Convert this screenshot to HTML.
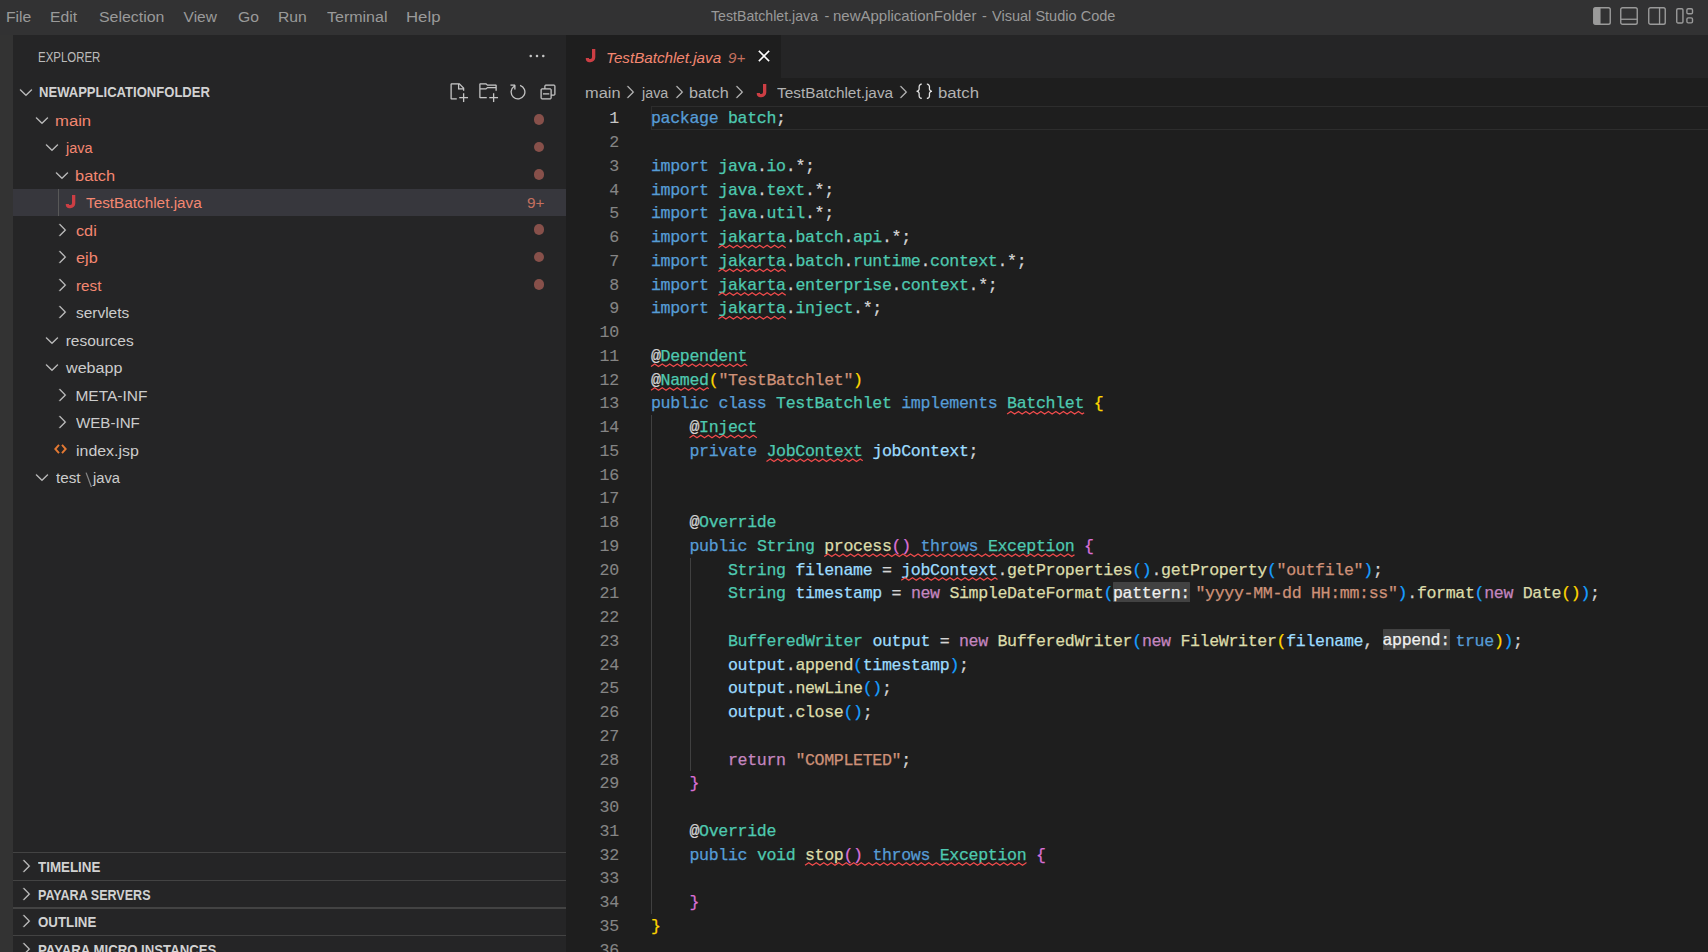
<!DOCTYPE html>
<html><head><meta charset="utf-8"><title>VS Code</title><style>
*{margin:0;padding:0;box-sizing:border-box}
html,body{width:1708px;height:952px;overflow:hidden;background:#1e1e1e}
body{position:relative;font-family:"Liberation Sans",sans-serif;-webkit-font-smoothing:antialiased}
.abs{position:absolute}
.box{position:absolute}
.u{position:absolute;white-space:pre;line-height:1;transform-origin:0 0;font-family:"Liberation Sans",sans-serif}
.ln{position:absolute;left:566px;width:52.8px;text-align:right;height:23.75px;font:16.6px "Liberation Mono",monospace;letter-spacing:-0.335px;line-height:23.75px;white-space:pre;padding-top:1.2px;-webkit-text-stroke:0.1px currentColor}
.cl{position:absolute;left:0;width:1708px;height:23.75px;font:16.6px "Liberation Mono",monospace;letter-spacing:-0.335px;line-height:23.75px;white-space:pre;-webkit-text-stroke:0.25px currentColor}
.cl span{position:absolute;top:1.2px;height:23.75px;line-height:23.75px}
.k{color:#569cd6}.c{color:#c586c0}.t{color:#4ec9b0}.v{color:#9cdcfe}.f{color:#dcdcaa}.s{color:#ce9178}.d{color:#d4d4d4}
.b1{color:#ffd700}.b2{color:#da70d6}.b3{color:#179fff}
.cl span.hint{color:#f0f0f0;background:#424242;top:0.6px;height:20.4px;line-height:24.95px;border-radius:0.5px;overflow:hidden}
svg{display:block;overflow:visible}
</style></head><body>
<div class="box" style="left:0;top:0;width:1708px;height:35px;background:#323233"></div>
<div class="box" style="left:0;top:35px;width:13px;height:917px;background:#333333"></div>
<div class="box" style="left:13px;top:35px;width:553px;height:917px;background:#252526"></div>
<div class="box" style="left:566px;top:35px;width:1142px;height:43px;background:#252526"></div>
<div class="box" style="left:566px;top:35px;width:214.7px;height:43px;background:#1e1e1e"></div>
<div class="box" style="left:13px;top:188.75px;width:553px;height:27.5px;background:#37373d"></div>
<div class="box" style="left:58px;top:188.75px;width:1.25px;height:27.5px;background:#585858"></div>
<div class="box" style="left:13px;top:852.2px;width:553px;height:1.25px;background:#434343"></div>
<div class="box" style="left:13px;top:879.8px;width:553px;height:1.25px;background:#434343"></div>
<div class="box" style="left:13px;top:907.3px;width:553px;height:1.25px;background:#434343"></div>
<div class="box" style="left:13px;top:934.8px;width:553px;height:1.25px;background:#434343"></div>
<div class="box" style="left:650.6px;top:106.25px;width:1060px;height:23.75px;border:1.25px solid #2d2d2d"></div>
<div class="box" style="left:651px;top:415.00px;width:1.25px;height:498.75px;background:#404040"></div>
<div class="box" style="left:689.5px;top:557.50px;width:1.25px;height:213.75px;background:#404040"></div>
<svg class="abs" style="left:1593px;top:7px" width="18" height="18" viewBox="0 0 18 18"><rect x="0.75" y="0.75" width="16.5" height="16.5" rx="1.8" fill="none" stroke="#9a9a9a" stroke-width="1.4"/><rect x="0.75" y="0.75" width="6.8" height="16.5" fill="#9a9a9a"/></svg>
<svg class="abs" style="left:1619.9px;top:7px" width="18" height="18" viewBox="0 0 18 18"><rect x="0.75" y="0.75" width="16.5" height="16.5" rx="1.8" fill="none" stroke="#9a9a9a" stroke-width="1.4"/><rect x="0.75" y="11.6" width="16.5" height="1.3" fill="#9a9a9a"/></svg>
<svg class="abs" style="left:1648px;top:7px" width="18" height="18" viewBox="0 0 18 18"><rect x="0.75" y="0.75" width="16.5" height="16.5" rx="1.8" fill="none" stroke="#9a9a9a" stroke-width="1.4"/><rect x="10.9" y="0.75" width="1.3" height="16.5" fill="#9a9a9a"/></svg>
<svg class="abs" style="left:1676px;top:7px" width="18" height="18" viewBox="0 0 18 18"><rect x="0.75" y="1.75" width="6.2" height="14.2" rx="1.3" fill="none" stroke="#9a9a9a" stroke-width="1.4"/><rect x="10.9" y="1.75" width="5.6" height="5" rx="1.3" fill="none" stroke="#9a9a9a" stroke-width="1.4"/><rect x="10.9" y="10.9" width="5.6" height="5" rx="1.3" fill="none" stroke="#9a9a9a" stroke-width="1.4"/></svg>
<svg class="abs" style="left:526.80px;top:46.00px" width="20" height="20" viewBox="0 0 16 16"><path fill="#c5c5c5" stroke="#c5c5c5" stroke-width="0.05" fill-rule="evenodd" clip-rule="evenodd" d="M4 8a1 1 0 1 1-2 0 1 1 0 0 1 2 0zm5 0a1 1 0 1 1-2 0 1 1 0 0 1 2 0zm5 0a1 1 0 1 1-2 0 1 1 0 0 1 2 0z"/></svg>
<svg class="abs" style="left:447.50px;top:81.50px" width="20" height="20" viewBox="0 0 16 16"><path fill="#c5c5c5" stroke="#c5c5c5" stroke-width="0.05" fill-rule="evenodd" clip-rule="evenodd" d="M9.5 1.1l3.4 3.5.1.4v2h-1V6H8V2H3v11h4v1H2.5l-.5-.5v-12l.5-.5h6.7l.3.1zM9 2v3h2.9L9 2zm4 14h-1v-3H9v-1h3V9h1v3h3v1h-3v3z"/></svg>
<svg class="abs" style="left:477.70px;top:81.50px" width="20" height="20" viewBox="0 0 16 16"><path fill="#c5c5c5" stroke="#c5c5c5" stroke-width="0.05" fill-rule="evenodd" clip-rule="evenodd" d="M14.5 2H7.71l-.85-.85L6.51 1h-5l-.5.5v11l.5.5H7v-1H1.99V6h4.49l.35-.15.86-.86H14v1.5l-.001.51h1.011V2.5L14.5 2zm-.51 2h-6.5l-.35.15-.86.86H2v-3h4.29l.85.85.36.15H14l-.01.99zM13 16h-1v-3H9v-1h3V9h1v3h3v1h-3v3z"/></svg>
<svg class="abs" style="left:507.50px;top:81.50px" width="20" height="20" viewBox="0 0 16 16"><path fill="#c5c5c5" stroke="#c5c5c5" stroke-width="0.05" fill-rule="evenodd" clip-rule="evenodd" d="M4.681 3H2V2h3.5l.5.5V6H5V4a5 5 0 1 0 4.53-.761l.302-.954A6 6 0 1 1 4.681 3z"/></svg>
<svg class="abs" style="left:538.00px;top:82.00px" width="20" height="20" viewBox="0 0 16 16"><path fill="#c5c5c5" stroke="#c5c5c5" stroke-width="0.05" fill-rule="evenodd" clip-rule="evenodd" d="M9 9H4v1h5V9z M5 3l1-1h7l1 1v7l-1 1h-2v2l-1 1H3l-1-1V6l1-1h2V3zm1 2h4l1 1v4h2V3H6v2zm4 1H3v7h7V6z"/></svg>
<svg class="abs" style="left:15.50px;top:82.40px" width="20" height="20" viewBox="0 0 16 16"><path fill="#c5c5c5" stroke="#c5c5c5" stroke-width="0.2" fill-rule="evenodd" clip-rule="evenodd" d="M7.976 10.072l4.357-4.357.62.618L8.284 11h-.618L3 6.333l.619-.618 4.357 4.357z"/></svg>
<svg class="abs" style="left:31.60px;top:109.50px" width="20" height="20" viewBox="0 0 16 16"><path fill="#c5c5c5" stroke="#c5c5c5" stroke-width="0.2" fill-rule="evenodd" clip-rule="evenodd" d="M7.976 10.072l4.357-4.357.62.618L8.284 11h-.618L3 6.333l.619-.618 4.357 4.357z"/></svg>
<svg class="abs" style="left:41.50px;top:137.00px" width="20" height="20" viewBox="0 0 16 16"><path fill="#c5c5c5" stroke="#c5c5c5" stroke-width="0.2" fill-rule="evenodd" clip-rule="evenodd" d="M7.976 10.072l4.357-4.357.62.618L8.284 11h-.618L3 6.333l.619-.618 4.357 4.357z"/></svg>
<svg class="abs" style="left:51.70px;top:164.50px" width="20" height="20" viewBox="0 0 16 16"><path fill="#c5c5c5" stroke="#c5c5c5" stroke-width="0.2" fill-rule="evenodd" clip-rule="evenodd" d="M7.976 10.072l4.357-4.357.62.618L8.284 11h-.618L3 6.333l.619-.618 4.357 4.357z"/></svg>
<svg class="abs" style="left:51.70px;top:219.80px" width="20" height="20" viewBox="0 0 16 16"><path fill="#c5c5c5" stroke="#c5c5c5" stroke-width="0.2" fill-rule="evenodd" clip-rule="evenodd" d="M10.072 8.024L5.715 3.667l.618-.62L11 7.716v.618L6.333 13l-.618-.619 4.357-4.357z"/></svg>
<svg class="abs" style="left:51.70px;top:247.30px" width="20" height="20" viewBox="0 0 16 16"><path fill="#c5c5c5" stroke="#c5c5c5" stroke-width="0.2" fill-rule="evenodd" clip-rule="evenodd" d="M10.072 8.024L5.715 3.667l.618-.62L11 7.716v.618L6.333 13l-.618-.619 4.357-4.357z"/></svg>
<svg class="abs" style="left:51.70px;top:274.80px" width="20" height="20" viewBox="0 0 16 16"><path fill="#c5c5c5" stroke="#c5c5c5" stroke-width="0.2" fill-rule="evenodd" clip-rule="evenodd" d="M10.072 8.024L5.715 3.667l.618-.62L11 7.716v.618L6.333 13l-.618-.619 4.357-4.357z"/></svg>
<svg class="abs" style="left:51.70px;top:302.30px" width="20" height="20" viewBox="0 0 16 16"><path fill="#c5c5c5" stroke="#c5c5c5" stroke-width="0.2" fill-rule="evenodd" clip-rule="evenodd" d="M10.072 8.024L5.715 3.667l.618-.62L11 7.716v.618L6.333 13l-.618-.619 4.357-4.357z"/></svg>
<svg class="abs" style="left:41.50px;top:329.50px" width="20" height="20" viewBox="0 0 16 16"><path fill="#c5c5c5" stroke="#c5c5c5" stroke-width="0.2" fill-rule="evenodd" clip-rule="evenodd" d="M7.976 10.072l4.357-4.357.62.618L8.284 11h-.618L3 6.333l.619-.618 4.357 4.357z"/></svg>
<svg class="abs" style="left:41.50px;top:357.00px" width="20" height="20" viewBox="0 0 16 16"><path fill="#c5c5c5" stroke="#c5c5c5" stroke-width="0.2" fill-rule="evenodd" clip-rule="evenodd" d="M7.976 10.072l4.357-4.357.62.618L8.284 11h-.618L3 6.333l.619-.618 4.357 4.357z"/></svg>
<svg class="abs" style="left:51.70px;top:384.80px" width="20" height="20" viewBox="0 0 16 16"><path fill="#c5c5c5" stroke="#c5c5c5" stroke-width="0.2" fill-rule="evenodd" clip-rule="evenodd" d="M10.072 8.024L5.715 3.667l.618-.62L11 7.716v.618L6.333 13l-.618-.619 4.357-4.357z"/></svg>
<svg class="abs" style="left:51.70px;top:412.30px" width="20" height="20" viewBox="0 0 16 16"><path fill="#c5c5c5" stroke="#c5c5c5" stroke-width="0.2" fill-rule="evenodd" clip-rule="evenodd" d="M10.072 8.024L5.715 3.667l.618-.62L11 7.716v.618L6.333 13l-.618-.619 4.357-4.357z"/></svg>
<svg class="abs" style="left:31.60px;top:467.00px" width="20" height="20" viewBox="0 0 16 16"><path fill="#c5c5c5" stroke="#c5c5c5" stroke-width="0.2" fill-rule="evenodd" clip-rule="evenodd" d="M7.976 10.072l4.357-4.357.62.618L8.284 11h-.618L3 6.333l.619-.618 4.357 4.357z"/></svg>
<svg class="abs" style="left:15.80px;top:856.00px" width="20" height="20" viewBox="0 0 16 16"><path fill="#c5c5c5" stroke="#c5c5c5" stroke-width="0.2" fill-rule="evenodd" clip-rule="evenodd" d="M10.072 8.024L5.715 3.667l.618-.62L11 7.716v.618L6.333 13l-.618-.619 4.357-4.357z"/></svg>
<svg class="abs" style="left:15.80px;top:883.80px" width="20" height="20" viewBox="0 0 16 16"><path fill="#c5c5c5" stroke="#c5c5c5" stroke-width="0.2" fill-rule="evenodd" clip-rule="evenodd" d="M10.072 8.024L5.715 3.667l.618-.62L11 7.716v.618L6.333 13l-.618-.619 4.357-4.357z"/></svg>
<svg class="abs" style="left:15.80px;top:911.20px" width="20" height="20" viewBox="0 0 16 16"><path fill="#c5c5c5" stroke="#c5c5c5" stroke-width="0.2" fill-rule="evenodd" clip-rule="evenodd" d="M10.072 8.024L5.715 3.667l.618-.62L11 7.716v.618L6.333 13l-.618-.619 4.357-4.357z"/></svg>
<svg class="abs" style="left:15.80px;top:938.80px" width="20" height="20" viewBox="0 0 16 16"><path fill="#c5c5c5" stroke="#c5c5c5" stroke-width="0.2" fill-rule="evenodd" clip-rule="evenodd" d="M10.072 8.024L5.715 3.667l.618-.62L11 7.716v.618L6.333 13l-.618-.619 4.357-4.357z"/></svg>
<div class="box" style="left:533.9px;top:114.10px;width:10.5px;height:10.5px;border-radius:50%;background:#87504a"></div>
<div class="box" style="left:533.9px;top:141.60px;width:10.5px;height:10.5px;border-radius:50%;background:#87504a"></div>
<div class="box" style="left:533.9px;top:169.10px;width:10.5px;height:10.5px;border-radius:50%;background:#87504a"></div>
<div class="box" style="left:533.9px;top:224.10px;width:10.5px;height:10.5px;border-radius:50%;background:#87504a"></div>
<div class="box" style="left:533.9px;top:251.60px;width:10.5px;height:10.5px;border-radius:50%;background:#87504a"></div>
<div class="box" style="left:533.9px;top:279.10px;width:10.5px;height:10.5px;border-radius:50%;background:#87504a"></div>
<svg class="abs" style="left:66.00px;top:195.20px" width="9.30" height="13.30" viewBox="0 0 9.30 13.30"><path d="M7.65 0 V8.35 A3.30 3.30 0 0 1 4.35 11.65 H2.95 Q1.35 11.65 1.40 9.05" fill="none" stroke="#cc3e44" stroke-width="3.3" stroke-linecap="butt"/></svg>
<svg class="abs" style="left:586.00px;top:48.80px" width="9.30" height="13.30" viewBox="0 0 9.30 13.30"><path d="M7.65 0 V8.35 A3.30 3.30 0 0 1 4.35 11.65 H2.95 Q1.35 11.65 1.40 9.05" fill="none" stroke="#cc3e44" stroke-width="3.3" stroke-linecap="butt"/></svg>
<svg class="abs" style="left:757.00px;top:84.20px" width="9.30" height="13.30" viewBox="0 0 9.30 13.30"><path d="M7.65 0 V8.35 A3.30 3.30 0 0 1 4.35 11.65 H2.95 Q1.35 11.65 1.40 9.05" fill="none" stroke="#cc3e44" stroke-width="3.3" stroke-linecap="butt"/></svg>
<svg class="abs" style="left:54px;top:444.4px" width="13" height="10" viewBox="0 0 13 10"><path d="M5 0.8 L1.3 5 L5 9.2 M8 0.8 L11.7 5 L8 9.2" fill="none" stroke="#e37933" stroke-width="1.9"/></svg>
<svg class="abs" style="left:0;top:0" width="1708" height="952"><path d="M86.1 472.6 L91.4 487" stroke="#858585" stroke-width="1.25" fill="none"/></svg>
<svg class="abs" style="left:754.00px;top:46.30px" width="20" height="20" viewBox="0 0 16 16"><path fill="#ffffff" stroke="#ffffff" stroke-width="0.35" fill-rule="evenodd" clip-rule="evenodd" d="M8 8.707l3.646 3.647.708-.707L8.707 8l3.647-3.646-.707-.708L8 7.293 4.354 3.646l-.707.708L7.293 8l-3.646 3.646.707.708L8 8.707z"/></svg>
<svg class="abs" style="left:620.40px;top:82.10px" width="20" height="20" viewBox="0 0 16 16"><path fill="#bdbdbd" stroke="#bdbdbd" stroke-width="0.15" fill-rule="evenodd" clip-rule="evenodd" d="M10.072 8.024L5.715 3.667l.618-.62L11 7.716v.618L6.333 13l-.618-.619 4.357-4.357z"/></svg>
<svg class="abs" style="left:668.60px;top:82.10px" width="20" height="20" viewBox="0 0 16 16"><path fill="#bdbdbd" stroke="#bdbdbd" stroke-width="0.15" fill-rule="evenodd" clip-rule="evenodd" d="M10.072 8.024L5.715 3.667l.618-.62L11 7.716v.618L6.333 13l-.618-.619 4.357-4.357z"/></svg>
<svg class="abs" style="left:728.60px;top:82.10px" width="20" height="20" viewBox="0 0 16 16"><path fill="#bdbdbd" stroke="#bdbdbd" stroke-width="0.15" fill-rule="evenodd" clip-rule="evenodd" d="M10.072 8.024L5.715 3.667l.618-.62L11 7.716v.618L6.333 13l-.618-.619 4.357-4.357z"/></svg>
<svg class="abs" style="left:893.10px;top:82.10px" width="20" height="20" viewBox="0 0 16 16"><path fill="#bdbdbd" stroke="#bdbdbd" stroke-width="0.15" fill-rule="evenodd" clip-rule="evenodd" d="M10.072 8.024L5.715 3.667l.618-.62L11 7.716v.618L6.333 13l-.618-.619 4.357-4.357z"/></svg>
<svg class="abs" style="left:914.00px;top:80.50px" width="20.6" height="20.6" viewBox="0 0 16 16"><path fill="#e4e4e4" stroke="#e4e4e4" stroke-width="0.05" fill-rule="nonzero" clip-rule="nonzero" d="M6 2.984V2h-.09c-.313 0-.616.062-.909.185a2.33 2.33 0 0 0-.775.53 2.23 2.23 0 0 0-.493.753v.001a3.542 3.542 0 0 0-.198.83v.002a6.08 6.08 0 0 0-.024.863c.012.29.018.58.018.869 0 .203-.04.393-.117.572v.001a1.504 1.504 0 0 1-.765.787 1.376 1.376 0 0 1-.558.115H2v.984h.09c.195 0 .38.04.556.121l.001.001c.178.078.329.184.455.318l.002.002c.13.13.233.285.307.465l.001.002c.078.18.117.368.117.566 0 .29-.006.58-.018.869-.012.296-.004.585.024.87v.001c.033.283.099.558.197.824v.001c.106.273.271.524.494.753.223.23.482.407.775.53.293.123.596.185.91.185H6v-.984h-.09c-.2 0-.387-.038-.563-.115a1.613 1.613 0 0 1-.457-.32 1.659 1.659 0 0 1-.309-.467c-.074-.18-.11-.37-.11-.573 0-.228.003-.453.011-.672.008-.228.008-.45 0-.665a4.639 4.639 0 0 0-.055-.64 2.682 2.682 0 0 0-.168-.609A2.284 2.284 0 0 0 3.522 8a2.284 2.284 0 0 0 .738-.955c.08-.192.135-.393.168-.602.033-.21.051-.423.055-.64.008-.22.008-.442 0-.666-.008-.224-.012-.45-.012-.678a1.47 1.47 0 0 1 .877-1.354 1.33 1.33 0 0 1 .563-.121H6zm4 10.032V14h.09c.313 0 .616-.062.909-.185.293-.123.552-.3.775-.53.223-.23.388-.48.493-.753v-.001c.1-.266.165-.543.198-.83v-.002c.028-.28.036-.567.024-.863-.012-.29-.018-.58-.018-.869 0-.203.04-.393.117-.572v-.001a1.504 1.504 0 0 1 .765-.787 1.376 1.376 0 0 1 .558-.115H14v-.984h-.09c-.195 0-.38-.04-.556-.121l-.001-.001a1.376 1.376 0 0 1-.455-.318l-.002-.002a1.415 1.415 0 0 1-.307-.465l-.001-.002a1.405 1.405 0 0 1-.117-.566c0-.29.006-.58.018-.869a6.19 6.19 0 0 0-.024-.87v-.001a3.542 3.542 0 0 0-.197-.824v-.001a2.23 2.23 0 0 0-.494-.753 2.33 2.33 0 0 0-.775-.53 2.325 2.325 0 0 0-.91-.185H10v.984h.09c.2 0 .387.038.563.115.174.082.326.188.457.32.127.134.23.29.309.467.074.18.11.37.11.573 0 .228-.003.452-.011.672-.008.228-.008.45 0 .665.004.222.022.435.055.64.033.214.089.416.168.609a2.282 2.282 0 0 0 .738.955 2.282 2.282 0 0 0-.738.955 2.7 2.7 0 0 0-.168.602c-.033.21-.051.423-.055.64-.008.22-.008.442 0 .666.008.224.012.45.012.678a1.47 1.47 0 0 1-.42 1.035 1.466 1.466 0 0 1-.457.319 1.33 1.33 0 0 1-.563.121H10z"/></svg>
<span class="u" style="left:6.09px;top:9.48px;font-size:15.5px;color:#9a9a9a;transform:scaleX(1.0148);">File</span>
<span class="u" style="left:50.38px;top:9.48px;font-size:15.5px;color:#9a9a9a;transform:scaleX(1.0151);">Edit</span>
<span class="u" style="left:98.50px;top:9.48px;font-size:15.5px;color:#9a9a9a;transform:scaleX(1.0262);">Selection</span>
<span class="u" style="left:183.60px;top:9.48px;font-size:15.5px;color:#9a9a9a;">View</span>
<span class="u" style="left:237.90px;top:9.48px;font-size:15.5px;color:#9a9a9a;transform:scaleX(1.0121);">Go</span>
<span class="u" style="left:278.19px;top:9.48px;font-size:15.5px;color:#9a9a9a;transform:scaleX(1.0144);">Run</span>
<span class="u" style="left:326.70px;top:9.48px;font-size:15.5px;color:#9a9a9a;transform:scaleX(1.0322);">Terminal</span>
<span class="u" style="left:406.22px;top:9.48px;font-size:15.5px;color:#9a9a9a;transform:scaleX(1.0807);">Help</span>
<span class="u" style="left:711.30px;top:9.01px;font-size:14.4px;color:#9a9a9a;transform:scaleX(0.9836);">TestBatchlet.java</span>
<span class="u" style="left:824.60px;top:9.01px;font-size:14.4px;color:#9a9a9a;">-</span>
<span class="u" style="left:833.40px;top:9.01px;font-size:14.4px;color:#9a9a9a;transform:scaleX(1.0421);">newApplicationFolder</span>
<span class="u" style="left:982.00px;top:9.01px;font-size:14.4px;color:#9a9a9a;">-</span>
<span class="u" style="left:992.00px;top:9.01px;font-size:14.4px;color:#9a9a9a;transform:scaleX(1.0104);">Visual Studio Code</span>
<span class="u" style="left:38.07px;top:51.36px;font-size:13.75px;color:#bbbbbb;transform:scaleX(0.8329);">EXPLORER</span>
<span class="u" style="left:38.90px;top:85.76px;font-size:13.75px;color:#d2d2d2;transform:scaleX(0.9495);font-weight:bold;">NEWAPPLICATIONFOLDER</span>
<span class="u" style="left:55.32px;top:112.88px;font-size:15.5px;color:#f48771;transform:scaleX(1.0758);">main</span>
<span class="u" style="left:65.93px;top:140.38px;font-size:15.5px;color:#f48771;transform:scaleX(0.9324);">java</span>
<span class="u" style="left:75.44px;top:167.88px;font-size:15.5px;color:#f48771;transform:scaleX(1.0607);">batch</span>
<span class="u" style="left:86.30px;top:195.38px;font-size:15.5px;color:#f48771;transform:scaleX(0.9876);">TestBatchlet.java</span>
<span class="u" style="left:76.00px;top:222.88px;font-size:15.5px;color:#f48771;transform:scaleX(1.0480);">cdi</span>
<span class="u" style="left:76.00px;top:250.38px;font-size:15.5px;color:#f48771;transform:scaleX(1.0467);">ejb</span>
<span class="u" style="left:76.12px;top:277.88px;font-size:15.5px;color:#f48771;transform:scaleX(0.9831);">rest</span>
<span class="u" style="left:75.60px;top:305.38px;font-size:15.5px;color:#cccccc;transform:scaleX(0.9953);">servlets</span>
<span class="u" style="left:65.70px;top:332.88px;font-size:15.5px;color:#cccccc;">resources</span>
<span class="u" style="left:65.84px;top:360.38px;font-size:15.5px;color:#cccccc;transform:scaleX(1.0389);">webapp</span>
<span class="u" style="left:75.40px;top:387.88px;font-size:15.5px;color:#cccccc;">META-INF</span>
<span class="u" style="left:75.60px;top:415.38px;font-size:15.5px;color:#cccccc;transform:scaleX(0.9759);">WEB-INF</span>
<span class="u" style="left:75.57px;top:442.88px;font-size:15.5px;color:#cccccc;transform:scaleX(1.0276);">index.jsp</span>
<span class="u" style="left:56.00px;top:470.38px;font-size:15.5px;color:#cccccc;transform:scaleX(0.9853);">test</span>
<span class="u" style="left:93.35px;top:470.38px;font-size:15.5px;color:#cccccc;transform:scaleX(0.9526);">java</span>
<span class="u" style="left:527.30px;top:196.15px;font-size:14px;color:#c4705f;transform:scaleX(1.0959);">9+</span>
<span class="u" style="left:38.40px;top:861.36px;font-size:13.75px;color:#d2d2d2;transform:scaleX(0.9720);font-weight:bold;">TIMELINE</span>
<span class="u" style="left:38.40px;top:888.66px;font-size:13.75px;color:#d2d2d2;transform:scaleX(0.9124);font-weight:bold;">PAYARA SERVERS</span>
<span class="u" style="left:38.40px;top:916.16px;font-size:13.75px;color:#d2d2d2;transform:scaleX(0.9655);font-weight:bold;">OUTLINE</span>
<span class="u" style="left:38.40px;top:943.66px;font-size:13.75px;color:#d2d2d2;transform:scaleX(0.9595);font-weight:bold;">PAYARA MICRO INSTANCES</span>
<span class="u" style="left:606.32px;top:49.88px;font-size:15.5px;color:#f48771;transform:scaleX(0.9799);font-style:italic;">TestBatchlet.java</span>
<span class="u" style="left:728.10px;top:50.81px;font-size:14.4px;color:#c4705f;transform:scaleX(1.0560);font-style:italic;">9+</span>
<span class="u" style="left:585.14px;top:84.58px;font-size:15.5px;color:#b2b2b2;transform:scaleX(1.0571);">main</span>
<span class="u" style="left:642.12px;top:84.58px;font-size:15.5px;color:#b2b2b2;transform:scaleX(0.9224);">java</span>
<span class="u" style="left:689.35px;top:84.58px;font-size:15.5px;color:#b2b2b2;transform:scaleX(1.0469);">batch</span>
<span class="u" style="left:777.00px;top:84.58px;font-size:15.5px;color:#b2b2b2;transform:scaleX(0.9910);">TestBatchlet.java</span>
<span class="u" style="left:938.12px;top:84.58px;font-size:15.5px;color:#b2b2b2;transform:scaleX(1.0800);">batch</span>
<div class="ln" style="top:106.25px;color:#c6c6c6">1</div>
<div class="cl" style="top:106.25px"><span class="k" style="left:651.00px">package</span><span class="t" style="left:728.00px">batch</span><span class="d" style="left:776.12px">;</span></div>
<div class="ln" style="top:130.00px;color:#858585">2</div>
<div class="ln" style="top:153.75px;color:#858585">3</div>
<div class="cl" style="top:153.75px"><span class="k" style="left:651.00px">import</span><span class="t" style="left:718.38px">java</span><span class="d" style="left:756.88px">.</span><span class="t" style="left:766.50px">io</span><span class="d" style="left:785.75px">.</span><span class="d" style="left:795.38px">*;</span></div>
<div class="ln" style="top:177.50px;color:#858585">4</div>
<div class="cl" style="top:177.50px"><span class="k" style="left:651.00px">import</span><span class="t" style="left:718.38px">java</span><span class="d" style="left:756.88px">.</span><span class="t" style="left:766.50px">text</span><span class="d" style="left:805.00px">.</span><span class="d" style="left:814.62px">*;</span></div>
<div class="ln" style="top:201.25px;color:#858585">5</div>
<div class="cl" style="top:201.25px"><span class="k" style="left:651.00px">import</span><span class="t" style="left:718.38px">java</span><span class="d" style="left:756.88px">.</span><span class="t" style="left:766.50px">util</span><span class="d" style="left:805.00px">.</span><span class="d" style="left:814.62px">*;</span></div>
<div class="ln" style="top:225.00px;color:#858585">6</div>
<div class="cl" style="top:225.00px"><span class="k" style="left:651.00px">import</span><span class="t" style="left:718.38px">jakarta</span><span class="d" style="left:785.75px">.</span><span class="t" style="left:795.38px">batch</span><span class="d" style="left:843.50px">.</span><span class="t" style="left:853.12px">api</span><span class="d" style="left:882.00px">.</span><span class="d" style="left:891.62px">*;</span></div>
<div class="ln" style="top:248.75px;color:#858585">7</div>
<div class="cl" style="top:248.75px"><span class="k" style="left:651.00px">import</span><span class="t" style="left:718.38px">jakarta</span><span class="d" style="left:785.75px">.</span><span class="t" style="left:795.38px">batch</span><span class="d" style="left:843.50px">.</span><span class="t" style="left:853.12px">runtime</span><span class="d" style="left:920.50px">.</span><span class="t" style="left:930.12px">context</span><span class="d" style="left:997.50px">.</span><span class="d" style="left:1007.12px">*;</span></div>
<div class="ln" style="top:272.50px;color:#858585">8</div>
<div class="cl" style="top:272.50px"><span class="k" style="left:651.00px">import</span><span class="t" style="left:718.38px">jakarta</span><span class="d" style="left:785.75px">.</span><span class="t" style="left:795.38px">enterprise</span><span class="d" style="left:891.62px">.</span><span class="t" style="left:901.25px">context</span><span class="d" style="left:968.62px">.</span><span class="d" style="left:978.25px">*;</span></div>
<div class="ln" style="top:296.25px;color:#858585">9</div>
<div class="cl" style="top:296.25px"><span class="k" style="left:651.00px">import</span><span class="t" style="left:718.38px">jakarta</span><span class="d" style="left:785.75px">.</span><span class="t" style="left:795.38px">inject</span><span class="d" style="left:853.12px">.</span><span class="d" style="left:862.75px">*;</span></div>
<div class="ln" style="top:320.00px;color:#858585">10</div>
<div class="ln" style="top:343.75px;color:#858585">11</div>
<div class="cl" style="top:343.75px"><span class="d" style="left:651.00px">@</span><span class="t" style="left:660.62px">Dependent</span></div>
<div class="ln" style="top:367.50px;color:#858585">12</div>
<div class="cl" style="top:367.50px"><span class="d" style="left:651.00px">@</span><span class="t" style="left:660.62px">Named</span><span class="b1" style="left:708.75px">(</span><span class="s" style="left:718.38px">&quot;TestBatchlet&quot;</span><span class="b1" style="left:853.12px">)</span></div>
<div class="ln" style="top:391.25px;color:#858585">13</div>
<div class="cl" style="top:391.25px"><span class="k" style="left:651.00px">public</span><span class="k" style="left:718.38px">class</span><span class="t" style="left:776.12px">TestBatchlet</span><span class="k" style="left:901.25px">implements</span><span class="t" style="left:1007.12px">Batchlet</span><span class="b1" style="left:1093.75px">{</span></div>
<div class="ln" style="top:415.00px;color:#858585">14</div>
<div class="cl" style="top:415.00px"><span class="d" style="left:689.50px">@</span><span class="t" style="left:699.12px">Inject</span></div>
<div class="ln" style="top:438.75px;color:#858585">15</div>
<div class="cl" style="top:438.75px"><span class="k" style="left:689.50px">private</span><span class="t" style="left:766.50px">JobContext</span><span class="v" style="left:872.38px">jobContext</span><span class="d" style="left:968.62px">;</span></div>
<div class="ln" style="top:462.50px;color:#858585">16</div>
<div class="ln" style="top:486.25px;color:#858585">17</div>
<div class="ln" style="top:510.00px;color:#858585">18</div>
<div class="cl" style="top:510.00px"><span class="d" style="left:689.50px">@</span><span class="t" style="left:699.12px">Override</span></div>
<div class="ln" style="top:533.75px;color:#858585">19</div>
<div class="cl" style="top:533.75px"><span class="k" style="left:689.50px">public</span><span class="t" style="left:756.88px">String</span><span class="f" style="left:824.25px">process</span><span class="b2" style="left:891.62px">()</span><span class="k" style="left:920.50px">throws</span><span class="t" style="left:987.88px">Exception</span><span class="b2" style="left:1084.12px">{</span></div>
<div class="ln" style="top:557.50px;color:#858585">20</div>
<div class="cl" style="top:557.50px"><span class="t" style="left:728.00px">String</span><span class="v" style="left:795.38px">filename</span><span class="d" style="left:872.38px"> = </span><span class="v" style="left:901.25px">jobContext</span><span class="d" style="left:997.50px">.</span><span class="f" style="left:1007.12px">getProperties</span><span class="b3" style="left:1132.25px">()</span><span class="d" style="left:1151.50px">.</span><span class="f" style="left:1161.12px">getProperty</span><span class="b3" style="left:1267.00px">(</span><span class="s" style="left:1276.62px">&quot;outfile&quot;</span><span class="b3" style="left:1363.25px">)</span><span class="d" style="left:1372.88px">;</span></div>
<div class="ln" style="top:581.25px;color:#858585">21</div>
<div class="cl" style="top:581.25px"><span class="t" style="left:728.00px">String</span><span class="v" style="left:795.38px">timestamp</span><span class="d" style="left:882.00px"> = </span><span class="c" style="left:910.88px">new</span><span class="f" style="left:949.38px">SimpleDateFormat</span><span class="b3" style="left:1103.38px">(</span><span class="hint" style="left:1113.00px;width:77.00px">pattern:</span><span class="s" style="left:1195.50px">&quot;yyyy-MM-dd HH:mm:ss&quot;</span><span class="b3" style="left:1397.62px">)</span><span class="d" style="left:1407.25px">.</span><span class="f" style="left:1416.88px">format</span><span class="b3" style="left:1474.62px">(</span><span class="c" style="left:1484.25px">new</span><span class="f" style="left:1522.75px">Date</span><span class="b1" style="left:1561.25px">()</span><span class="b3" style="left:1580.50px">)</span><span class="d" style="left:1590.12px">;</span></div>
<div class="ln" style="top:605.00px;color:#858585">22</div>
<div class="ln" style="top:628.75px;color:#858585">23</div>
<div class="cl" style="top:628.75px"><span class="t" style="left:728.00px">BufferedWriter</span><span class="v" style="left:872.38px">output</span><span class="d" style="left:930.12px"> = </span><span class="c" style="left:959.00px">new</span><span class="f" style="left:997.50px">BufferedWriter</span><span class="b3" style="left:1132.25px">(</span><span class="c" style="left:1141.88px">new</span><span class="f" style="left:1180.38px">FileWriter</span><span class="b1" style="left:1276.62px">(</span><span class="v" style="left:1286.25px">filename</span><span class="d" style="left:1363.25px">, </span><span class="hint" style="left:1382.50px;width:67.38px">append:</span><span class="k" style="left:1455.38px">true</span><span class="b1" style="left:1493.88px">)</span><span class="b3" style="left:1503.50px">)</span><span class="d" style="left:1513.12px">;</span></div>
<div class="ln" style="top:652.50px;color:#858585">24</div>
<div class="cl" style="top:652.50px"><span class="v" style="left:728.00px">output</span><span class="d" style="left:785.75px">.</span><span class="f" style="left:795.38px">append</span><span class="b3" style="left:853.12px">(</span><span class="v" style="left:862.75px">timestamp</span><span class="b3" style="left:949.38px">)</span><span class="d" style="left:959.00px">;</span></div>
<div class="ln" style="top:676.25px;color:#858585">25</div>
<div class="cl" style="top:676.25px"><span class="v" style="left:728.00px">output</span><span class="d" style="left:785.75px">.</span><span class="f" style="left:795.38px">newLine</span><span class="b3" style="left:862.75px">()</span><span class="d" style="left:882.00px">;</span></div>
<div class="ln" style="top:700.00px;color:#858585">26</div>
<div class="cl" style="top:700.00px"><span class="v" style="left:728.00px">output</span><span class="d" style="left:785.75px">.</span><span class="f" style="left:795.38px">close</span><span class="b3" style="left:843.50px">()</span><span class="d" style="left:862.75px">;</span></div>
<div class="ln" style="top:723.75px;color:#858585">27</div>
<div class="ln" style="top:747.50px;color:#858585">28</div>
<div class="cl" style="top:747.50px"><span class="c" style="left:728.00px">return</span><span class="s" style="left:795.38px">&quot;COMPLETED&quot;</span><span class="d" style="left:901.25px">;</span></div>
<div class="ln" style="top:771.25px;color:#858585">29</div>
<div class="cl" style="top:771.25px"><span class="b2" style="left:689.50px">}</span></div>
<div class="ln" style="top:795.00px;color:#858585">30</div>
<div class="ln" style="top:818.75px;color:#858585">31</div>
<div class="cl" style="top:818.75px"><span class="d" style="left:689.50px">@</span><span class="t" style="left:699.12px">Override</span></div>
<div class="ln" style="top:842.50px;color:#858585">32</div>
<div class="cl" style="top:842.50px"><span class="k" style="left:689.50px">public</span><span class="t" style="left:756.88px">void</span><span class="f" style="left:805.00px">stop</span><span class="b2" style="left:843.50px">()</span><span class="k" style="left:872.38px">throws</span><span class="t" style="left:939.75px">Exception</span><span class="b2" style="left:1036.00px">{</span></div>
<div class="ln" style="top:866.25px;color:#858585">33</div>
<div class="ln" style="top:890.00px;color:#858585">34</div>
<div class="cl" style="top:890.00px"><span class="b2" style="left:689.50px">}</span></div>
<div class="ln" style="top:913.75px;color:#858585">35</div>
<div class="cl" style="top:913.75px"><span class="b1" style="left:651.00px">}</span></div>
<div class="ln" style="top:937.50px;color:#858585">36</div>
<svg class="abs" style="left:0;top:0" width="1708" height="952" viewBox="0 0 1708 952"><path d="M718.38 247.85 L722.12 245.25 L725.88 247.85 L729.62 245.25 L733.38 247.85 L737.12 245.25 L740.88 247.85 L744.62 245.25 L748.38 247.85 L752.12 245.25 L755.88 247.85 L759.62 245.25 L763.38 247.85 L767.12 245.25 L770.88 247.85 L774.62 245.25 L778.38 247.85 L782.12 245.25 L785.75 247.76 M718.38 271.60 L722.12 269.00 L725.88 271.60 L729.62 269.00 L733.38 271.60 L737.12 269.00 L740.88 271.60 L744.62 269.00 L748.38 271.60 L752.12 269.00 L755.88 271.60 L759.62 269.00 L763.38 271.60 L767.12 269.00 L770.88 271.60 L774.62 269.00 L778.38 271.60 L782.12 269.00 L785.75 271.51 M718.38 295.35 L722.12 292.75 L725.88 295.35 L729.62 292.75 L733.38 295.35 L737.12 292.75 L740.88 295.35 L744.62 292.75 L748.38 295.35 L752.12 292.75 L755.88 295.35 L759.62 292.75 L763.38 295.35 L767.12 292.75 L770.88 295.35 L774.62 292.75 L778.38 295.35 L782.12 292.75 L785.75 295.26 M718.38 319.10 L722.12 316.50 L725.88 319.10 L729.62 316.50 L733.38 319.10 L737.12 316.50 L740.88 319.10 L744.62 316.50 L748.38 319.10 L752.12 316.50 L755.88 319.10 L759.62 316.50 L763.38 319.10 L767.12 316.50 L770.88 319.10 L774.62 316.50 L778.38 319.10 L782.12 316.50 L785.75 319.01 M651.00 366.60 L654.75 364.00 L658.50 366.60 L662.25 364.00 L666.00 366.60 L669.75 364.00 L673.50 366.60 L677.25 364.00 L681.00 366.60 L684.75 364.00 L688.50 366.60 L692.25 364.00 L696.00 366.60 L699.75 364.00 L703.50 366.60 L707.25 364.00 L711.00 366.60 L714.75 364.00 L718.50 366.60 L722.25 364.00 L726.00 366.60 L729.75 364.00 L733.50 366.60 L737.25 364.00 L741.00 366.60 L744.75 364.00 L747.25 365.73 M651.00 390.35 L654.75 387.75 L658.50 390.35 L662.25 387.75 L666.00 390.35 L669.75 387.75 L673.50 390.35 L677.25 387.75 L681.00 390.35 L684.75 387.75 L688.50 390.35 L692.25 387.75 L696.00 390.35 L699.75 387.75 L703.50 390.35 L707.25 387.75 L708.75 388.79 M1007.12 414.10 L1010.88 411.50 L1014.62 414.10 L1018.38 411.50 L1022.12 414.10 L1025.88 411.50 L1029.62 414.10 L1033.38 411.50 L1037.12 414.10 L1040.88 411.50 L1044.62 414.10 L1048.38 411.50 L1052.12 414.10 L1055.88 411.50 L1059.62 414.10 L1063.38 411.50 L1067.12 414.10 L1070.88 411.50 L1074.62 414.10 L1078.38 411.50 L1082.12 414.10 L1084.12 412.71 M689.50 437.85 L693.25 435.25 L697.00 437.85 L700.75 435.25 L704.50 437.85 L708.25 435.25 L712.00 437.85 L715.75 435.25 L719.50 437.85 L723.25 435.25 L727.00 437.85 L730.75 435.25 L734.50 437.85 L738.25 435.25 L742.00 437.85 L745.75 435.25 L749.50 437.85 L753.25 435.25 L756.88 437.76 M766.50 461.60 L770.25 459.00 L774.00 461.60 L777.75 459.00 L781.50 461.60 L785.25 459.00 L789.00 461.60 L792.75 459.00 L796.50 461.60 L800.25 459.00 L804.00 461.60 L807.75 459.00 L811.50 461.60 L815.25 459.00 L819.00 461.60 L822.75 459.00 L826.50 461.60 L830.25 459.00 L834.00 461.60 L837.75 459.00 L841.50 461.60 L845.25 459.00 L849.00 461.60 L852.75 459.00 L856.50 461.60 L860.25 459.00 L862.75 460.73 M824.25 556.60 L828.00 554.00 L831.75 556.60 L835.50 554.00 L839.25 556.60 L843.00 554.00 L846.75 556.60 L850.50 554.00 L854.25 556.60 L858.00 554.00 L861.75 556.60 L865.50 554.00 L869.25 556.60 L873.00 554.00 L876.75 556.60 L880.50 554.00 L884.25 556.60 L888.00 554.00 L891.75 556.60 L895.50 554.00 L899.25 556.60 L903.00 554.00 L906.75 556.60 L910.50 554.00 L914.25 556.60 L918.00 554.00 L921.75 556.60 L925.50 554.00 L929.25 556.60 L933.00 554.00 L936.75 556.60 L940.50 554.00 L944.25 556.60 L948.00 554.00 L951.75 556.60 L955.50 554.00 L959.25 556.60 L963.00 554.00 L966.75 556.60 L970.50 554.00 L974.25 556.60 L978.00 554.00 L981.75 556.60 L985.50 554.00 L989.25 556.60 L993.00 554.00 L996.75 556.60 L1000.50 554.00 L1004.25 556.60 L1008.00 554.00 L1011.75 556.60 L1015.50 554.00 L1019.25 556.60 L1023.00 554.00 L1026.75 556.60 L1030.50 554.00 L1034.25 556.60 L1038.00 554.00 L1041.75 556.60 L1045.50 554.00 L1049.25 556.60 L1053.00 554.00 L1056.75 556.60 L1060.50 554.00 L1064.25 556.60 L1068.00 554.00 L1071.75 556.60 L1074.50 554.69 M901.25 580.35 L905.00 577.75 L908.75 580.35 L912.50 577.75 L916.25 580.35 L920.00 577.75 L923.75 580.35 L927.50 577.75 L931.25 580.35 L935.00 577.75 L938.75 580.35 L942.50 577.75 L946.25 580.35 L950.00 577.75 L953.75 580.35 L957.50 577.75 L961.25 580.35 L965.00 577.75 L968.75 580.35 L972.50 577.75 L976.25 580.35 L980.00 577.75 L983.75 580.35 L987.50 577.75 L991.25 580.35 L995.00 577.75 L997.50 579.48 M805.00 865.35 L808.75 862.75 L812.50 865.35 L816.25 862.75 L820.00 865.35 L823.75 862.75 L827.50 865.35 L831.25 862.75 L835.00 865.35 L838.75 862.75 L842.50 865.35 L846.25 862.75 L850.00 865.35 L853.75 862.75 L857.50 865.35 L861.25 862.75 L865.00 865.35 L868.75 862.75 L872.50 865.35 L876.25 862.75 L880.00 865.35 L883.75 862.75 L887.50 865.35 L891.25 862.75 L895.00 865.35 L898.75 862.75 L902.50 865.35 L906.25 862.75 L910.00 865.35 L913.75 862.75 L917.50 865.35 L921.25 862.75 L925.00 865.35 L928.75 862.75 L932.50 865.35 L936.25 862.75 L940.00 865.35 L943.75 862.75 L947.50 865.35 L951.25 862.75 L955.00 865.35 L958.75 862.75 L962.50 865.35 L966.25 862.75 L970.00 865.35 L973.75 862.75 L977.50 865.35 L981.25 862.75 L985.00 865.35 L988.75 862.75 L992.50 865.35 L996.25 862.75 L1000.00 865.35 L1003.75 862.75 L1007.50 865.35 L1011.25 862.75 L1015.00 865.35 L1018.75 862.75 L1022.50 865.35 L1026.25 862.75 L1026.38 862.84" fill="none" stroke="#f14c4c" stroke-width="1.25" stroke-linejoin="miter"/></svg>
</body></html>
